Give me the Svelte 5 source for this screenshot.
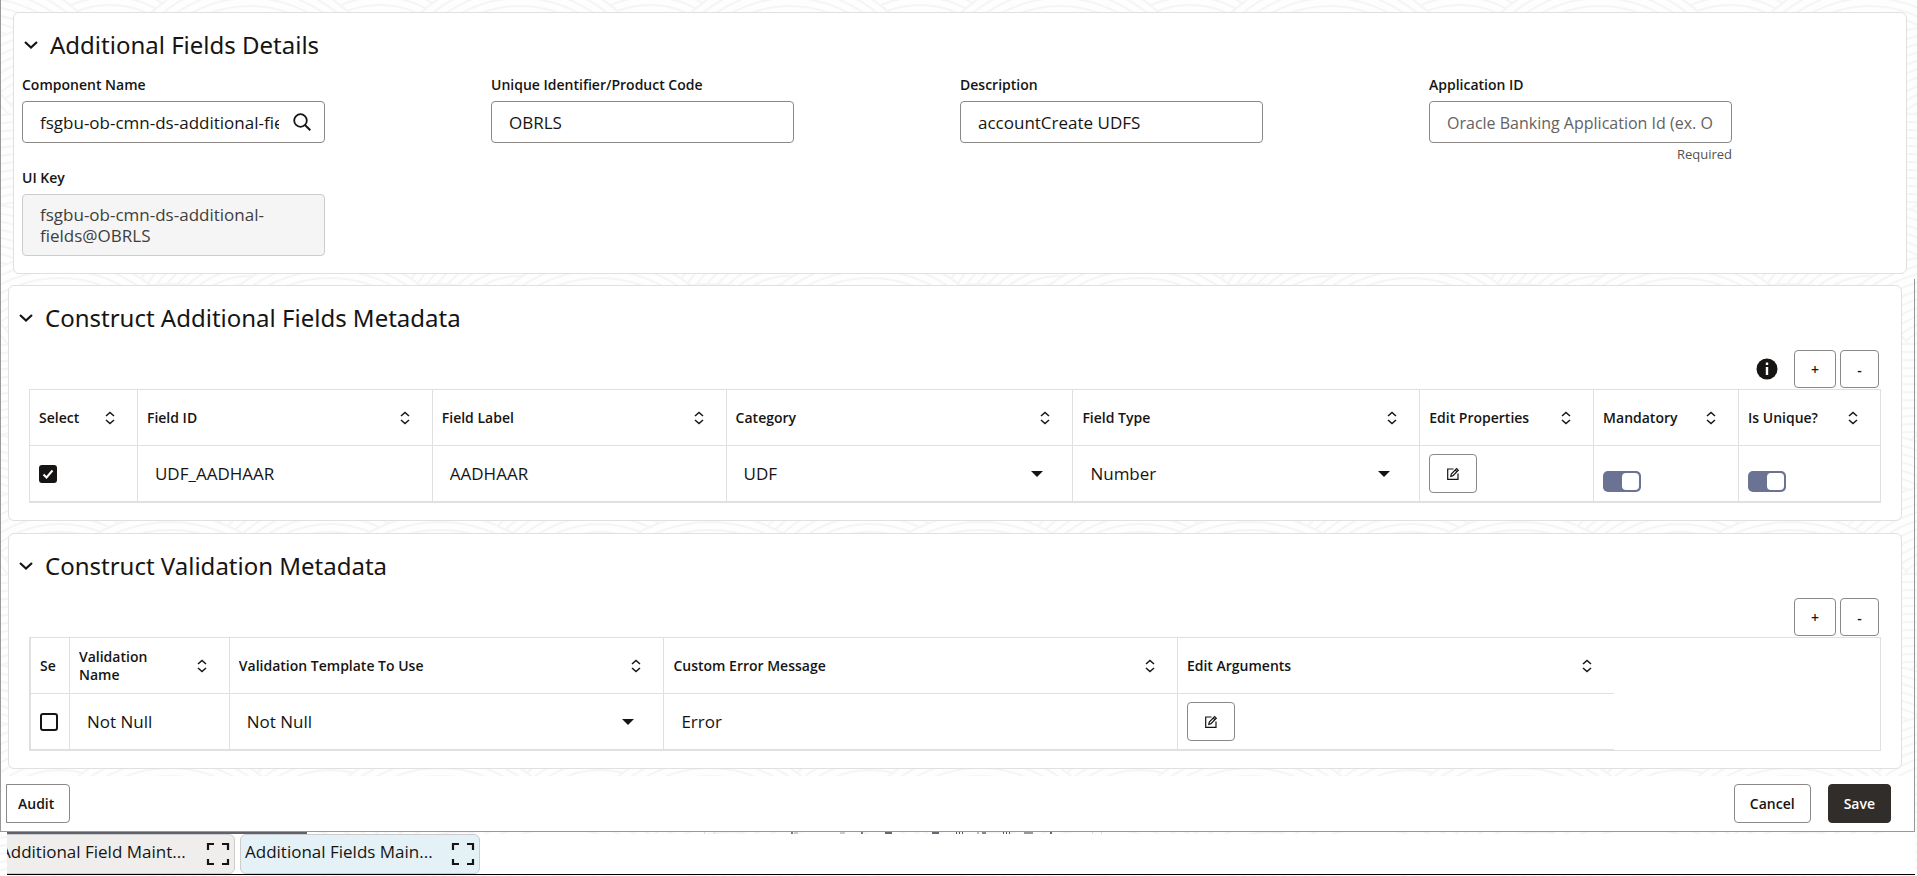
<script>
    //Values of the details form
    let componentName = "fsgbu-ob-cmn-ds-additional-fields";
    let productCode = "OBRLS";
    let description = "accountCreate UDFS";
    let applicationId = "";
    let uiKey = "fsgbu-ob-cmn-ds-additional-fields@OBRLS";

    //Columns of the two tables, 'size' is the relative width of the column
    const fieldColumns = [
        {label: "Select", size: 108},
        {label: "Field ID", size: 295},
        {label: "Field Label", size: 294},
        {label: "Category", size: 347},
        {label: "Field Type", size: 347},
        {label: "Edit Properties", size: 174},
        {label: "Mandatory", size: 145},
        {label: "Is Unique?", size: 141}
    ];
    const validationColumns = [
        {label: "Select", size: 39, narrow: true},
        {label: "Validation Name", size: 160},
        {label: "Validation Template To Use", size: 435},
        {label: "Custom Error Message", size: 514},
        {label: "Edit Arguments", size: 436}
    ];

    let fieldRows = [
        {selected: true, id: "UDF_AADHAAR", label: "AADHAAR", category: "UDF", type: "Number", mandatory: true, unique: true}
    ];
    let validationRows = [
        {selected: false, name: "Not Null", template: "Not Null", message: "Error"}
    ];

    //Minimised windows in the task bar
    const tasks = [
        {title: "Additional Field Maint...", active: false},
        {title: "Additional Fields Main...", active: true}
    ];

    //Radii of the rings in the background pattern
    const rings = [146, 138, 130, 122, 114, 106, 98, 90, 82, 74, 66, 58, 50, 42, 34, 26, 18, 10];
    //Ring centres in one tile, repeated to the left, right, top and bottom so that the tiles join
    const ringCenters = [[20, 30], [190, 10], [110, 95], [250, 120], [60, 170], [170, 200]]
        .flatMap(([x, y]) => [-1, 0, 1].flatMap((i) => [-1, 0, 1].map((j) => [x + i * 270, y + j * 230])))
        .sort((a, b) => a[1] - b[1]);

    //Text tops of the page behind, seen under the window edge: x, width, colour
    const marks = [[704, 1, "#ddd"], [714, 1, "#ddd"], [791, 2, "#777"], [794, 4, "#ccc"], [840, 5, "#ccc"], [861, 2, "#777"],
        [885, 7, "#666974"], [932, 7, "#666974"], [956, 1, "#555"], [959, 1, "#555"], [962, 1, "#555"], [977, 2, "#bbb"],
        [982, 4, "#888"], [1003, 1, "#555"], [1006, 1, "#555"], [1009, 1, "#555"], [1024, 9, "#999"], [1050, 2, "#666"], [1092, 1, "#ddd"], [1101, 1, "#ddd"]];

    const share = (columns, size) => {
        const total = columns.reduce((sum, column) => sum + column.size, 0);
        return (size / total) * 100;
    };
</script>

{#snippet title(text)}
    <h2>
        <button class="collapse">
            <svg width="14" height="14" viewBox="0 0 14 14" aria-hidden="true">
                <path d="M1 4l6 5.600 6-5.600" fill="none" stroke="currentColor" stroke-width="2.200" />
            </svg>
            {text}
        </button>
    </h2>
{/snippet}

{#snippet head(columns)}
    <colgroup>
        {#each columns as column}
            <col style="width: {share(columns, column.size)}%">
        {/each}
    </colgroup>
    <thead>
        <tr>
            {#each columns as column}
                <th class:narrow={column.narrow}>
                    <div class="head-cell">
                        <span>{column.label}</span>
                        {#if !column.narrow}
                            <button class="sort" aria-label="Sort by {column.label}">
                                <svg width="10" height="14" viewBox="0 0 10 14" aria-hidden="true">
                                    <path d="M1 5l4-3.500 4 3.500M1 9l4 3.500 4-3.500" fill="none" stroke="currentColor" stroke-width="1.500" />
                                </svg>
                            </button>
                        {/if}
                    </div>
                </th>
            {/each}
        </tr>
    </thead>
{/snippet}

{#snippet editButton(label)}
    <button class="edit" aria-label={label}>
        <svg width="14" height="14" viewBox="0 0 14 14" aria-hidden="true">
            <g fill="none" stroke="currentColor" stroke-width="1.200">
                <path d="M7.500 2H1.700v10.300H12V6.500" />
                <path d="M4.800 9.300l.5-2.200L10.600 1.500l1.700 1.700L7 8.700z" />
                <path d="M9.200 3l1.700 1.700" />
            </g>
        </svg>
    </button>
{/snippet}

{#snippet caret()}
    <svg class="caret" width="12" height="6" viewBox="0 0 12 6" aria-hidden="true">
        <path d="M0 0h12L6 6z" fill="currentColor" />
    </svg>
{/snippet}

{#snippet tick()}
    <svg class="tick" width="18" height="18" viewBox="0 0 18 18" aria-hidden="true">
        <path d="M4.500 9.500l3 3 6-7" fill="none" stroke="#fff" stroke-width="2" />
    </svg>
{/snippet}

<div class="page">
    <svg class="backdrop" aria-hidden="true">
        <defs>
            <pattern id="waves" width="270" height="230" patternUnits="userSpaceOnUse">
                {#each ringCenters as [cx, cy]}
                    {#each rings as r}
                        <circle {cx} {cy} {r} fill="#fefefe" stroke="#f5f5f5" stroke-width="2" />
                    {/each}
                {/each}
            </pattern>
        </defs>
        <rect width="100%" height="100%" fill="url(#waves)" />
    </svg>

    <div class="window">
        <section class="card details">
            {@render title("Additional Fields Details")}
            <div class="form">
                <div class="field">
                    <label for="component-name">Component Name</label>
                    <div class="box">
                        <input id="component-name" bind:value={componentName}>
                        <button class="search" aria-label="Search">
                            <svg width="18" height="18" viewBox="0 0 18 18" aria-hidden="true">
                                <circle cx="7.500" cy="7.500" r="6.300" fill="none" stroke="currentColor" stroke-width="1.800" />
                                <path d="M12 12l5.300 5.300" stroke="currentColor" stroke-width="2" />
                            </svg>
                        </button>
                    </div>
                </div>
                <div class="field">
                    <label for="product-code">Unique Identifier/Product Code</label>
                    <div class="box"><input id="product-code" bind:value={productCode}></div>
                </div>
                <div class="field">
                    <label for="description">Description</label>
                    <div class="box"><input id="description" bind:value={description}></div>
                </div>
                <div class="field">
                    <label for="application-id">Application ID</label>
                    <div class="box">
                        <input id="application-id" placeholder="Oracle Banking Application Id (ex. OBRLS)" bind:value={applicationId}>
                    </div>
                    <span class="hint">Required</span>
                </div>
                <div class="field">
                    <label for="ui-key">UI Key</label>
                    <textarea id="ui-key" rows="2" readonly value={uiKey}></textarea>
                </div>
            </div>
        </section>

        <div class="lower">
            <section class="card">
                {@render title("Construct Additional Fields Metadata")}
                <div class="toolbar">
                    <svg class="info" width="22" height="22" viewBox="0 0 22 22" aria-hidden="true">
                        <circle cx="11" cy="11" r="10.500" fill="currentColor" />
                        <path d="M11 9v8M11 4.500v2.500" stroke="#fff" stroke-width="2.400" />
                    </svg>
                    <button class="add">+</button>
                    <button class="remove">-</button>
                </div>
                <div class="grid">
                    <table>
                        {@render head(fieldColumns)}
                        <tbody>
                            {#each fieldRows as row}
                                <tr>
                                    <td>
                                        <label class="check">
                                            <input type="checkbox" aria-label="Select {row.id}" bind:checked={row.selected}>
                                            {@render tick()}
                                        </label>
                                    </td>
                                    <td><input class="text" aria-label="Field ID" bind:value={row.id}></td>
                                    <td><input class="text" aria-label="Field Label" bind:value={row.label}></td>
                                    <td>
                                        <div class="choice">
                                            <select aria-label="Category" bind:value={row.category}><option>UDF</option></select>
                                            {@render caret()}
                                        </div>
                                    </td>
                                    <td>
                                        <div class="choice">
                                            <select aria-label="Field Type" bind:value={row.type}><option>Number</option></select>
                                            {@render caret()}
                                        </div>
                                    </td>
                                    <td>{@render editButton("Edit properties")}</td>
                                    <td class="switch-cell"><input class="switch" type="checkbox" role="switch" aria-label="Mandatory" bind:checked={row.mandatory}></td>
                                    <td class="switch-cell"><input class="switch" type="checkbox" role="switch" aria-label="Is Unique?" bind:checked={row.unique}></td>
                                </tr>
                            {/each}
                        </tbody>
                    </table>
                </div>
            </section>

            <section class="card">
                {@render title("Construct Validation Metadata")}
                <div class="toolbar">
                    <button class="add">+</button>
                    <button class="remove">-</button>
                </div>
                <div class="grid">
                    <table class="validation">
                        {@render head(validationColumns)}
                        <tbody>
                            {#each validationRows as row}
                                <tr>
                                    <td>
                                        <label class="check">
                                            <input type="checkbox" aria-label="Select {row.name}" bind:checked={row.selected}>
                                            {@render tick()}
                                        </label>
                                    </td>
                                    <td><input class="text" aria-label="Validation Name" bind:value={row.name}></td>
                                    <td>
                                        <div class="choice">
                                            <select aria-label="Validation Template To Use" bind:value={row.template}><option>Not Null</option></select>
                                            {@render caret()}
                                        </div>
                                    </td>
                                    <td><input class="text" aria-label="Custom Error Message" bind:value={row.message}></td>
                                    <td>{@render editButton("Edit arguments")}</td>
                                </tr>
                            {/each}
                        </tbody>
                    </table>
                </div>
            </section>

            <footer>
                <button class="audit">Audit</button>
                <button class="cancel">Cancel</button>
                <button class="save">Save</button>
            </footer>
        </div>
    </div>

    <!--Edge of the page behind the window-->
    <svg class="sliver" height="2" aria-hidden="true">
        <rect x="7" width="300" height="2" fill="#5f626c" />
        {#each marks as [x, width, fill]}
            <rect {x} {width} {fill} height="2" />
        {/each}
    </svg>

    <nav class="taskbar">
        {#each tasks as task}
            <div class="task" class:active={task.active}>
                <span>{task.title}</span>
                <button aria-label="Maximise {task.title}">
                    <svg width="24" height="24" viewBox="0 0 24 24" aria-hidden="true">
                        <path d="M2 8V2h6M16 2h6v6M22 17v5h-6M8 22H2v-5" fill="none" stroke="currentColor" stroke-width="2.200" />
                    </svg>
                </button>
            </div>
        {/each}
    </nav>
</div>

<style>
    :global(body){
        background-color: #fff;
        color: #161513;
        font-family: "Open Sans", "Noto Sans", sans-serif;
        font-size: 17px;
    }

    .page, .page *{
        box-sizing: border-box;
    }

    .page{
        position: relative;
        overflow: hidden;
    }

    .backdrop{
        position: absolute;
        inset: 0;
        width: 100%;
        height: 100%;
        z-index: -1;
    }

    button, input, select, textarea{
        font: inherit;
        color: inherit;
        margin: 0;
        padding: 0;
        border: none;
        background: none;
        outline: none;
        border-radius: 0;
    }

    svg{
        display: block;
        flex: none;
    }

    /*Window and cards*/
    .window{
        margin-right: 2px;
        padding-top: 12px;
        border-left: 1px solid #999;
        border-bottom: 1px solid #999;
    }

    .card{
        margin: 0 12px 12px 7px;
        padding: 16px 20px 17px;
        background-color: #fff;
        border: 1px solid #e0e0e0;
        border-radius: 6px;
    }

    .card.details{
        margin: 0 8px 5px 12px;
        padding: 16px 8px 17px;
    }

    .lower{
        padding-top: 6px;
        border-right: 1px solid #999;
    }

    h2{
        margin: 0 0 0 -10px;
        font-size: 24px;
        line-height: 32px;
        font-weight: 400;
        font-family: "Noto Sans", "Open Sans", sans-serif;
    }

    .details h2{
        margin-left: 2px;
    }

    .collapse{
        display: flex;
        align-items: center;
        gap: 12px;
    }

    /*Details form*/
    .form{
        display: grid;
        grid-template-columns: repeat(4, 1fr);
        row-gap: 3px;
        margin-top: 14px;
    }

    .field{
        display: flex;
        flex-direction: column;
        gap: 6px;
        margin-right: 166px;
    }

    .field label{
        font-size: 14px;
        line-height: 20px;
        font-weight: 600;
    }

    .box{
        display: flex;
        align-items: center;
        height: 42px;
        padding: 0 17px;
        background-color: #fff;
        border: 1px solid #8b8886;
        border-radius: 4px;
    }

    .box input{
        flex: 1;
        min-width: 0;
        width: 100%;
    }

    .box input::placeholder{
        font-size: 16px;
        color: #65625f;
        opacity: 1;
    }

    .search{
        margin: 0 -4px 0 14px;
    }

    .hint{
        margin-top: -4px;
        text-align: right;
        font-size: 13px;
        line-height: 18px;
        padding-bottom: 2px;
        color: #55524f;
    }

    textarea{
        display: block;
        height: 62px;
        padding: 9px 17px;
        line-height: 21px;
        resize: none;
        overflow: hidden;
        color: #403e3c;
        background-color: #f5f5f5;
        border: 1px solid #ccc;
        border-radius: 4px;
    }

    /*Tables*/
    .toolbar{
        display: flex;
        justify-content: flex-end;
        align-items: center;
        gap: 4px;
        margin: 16px 2px 1px 0;
    }

    .info{
        margin-right: 12px;
    }

    .add, .remove, .edit, footer button{
        background-color: #fff;
        border: 1px solid #8b8886;
        border-radius: 4px;
        font-size: 14px;
        font-weight: 600;
    }

    .add, .remove{
        width: 42px;
        height: 38px;
    }

    .remove{
        width: 39px;
    }

    .grid{
        border: 1px solid #e0e0e0;
    }

    table{
        width: 100%;
        table-layout: fixed;
        border-collapse: separate;
        border-spacing: 0;
    }

    .validation{
        width: 85.6%;
        border-left: 1px solid #e0e0e0;
    }

    th, td{
        height: 56px;
        padding: 0 0 0 9px;
        border-bottom: 1px solid #e0e0e0;
        border-right: 1px solid #e0e0e0;
        text-align: left;
        vertical-align: middle;
    }

    th:last-child, td:last-child{
        border-right: none;
    }

    th{
        padding-right: 22px;
        font-size: 14px;
        line-height: 18px;
        font-weight: 600;
    }

    th.narrow{
        padding-right: 13px;
    }

    .head-cell{
        display: flex;
        justify-content: space-between;
        align-items: center;
        gap: 20px;
        overflow: hidden;
    }

    .text, select{
        display: block;
        width: 100%;
        height: 40px;
        padding: 0 8px;
    }

    select{
        appearance: none;
    }

    .choice{
        position: relative;
    }

    .caret{
        position: absolute;
        right: 29px;
        top: 17px;
        pointer-events: none;
    }

    .check{
        position: relative;
        display: block;
        width: 18px;
        height: 18px;
    }

    .check input{
        display: block;
        width: 18px;
        height: 18px;
        appearance: none;
        border: 2px solid #161513;
        border-radius: 3px;
    }

    .check input:checked{
        background-color: #161513;
    }

    .tick{
        display: none;
        position: absolute;
        left: 0;
        top: 0;
        pointer-events: none;
    }

    .check input:checked + .tick{
        display: block;
    }

    .edit{
        display: flex;
        align-items: center;
        justify-content: center;
        width: 48px;
        height: 39px;
    }

    .switch-cell{
        padding-top: 16px;
    }

    .switch{
        display: block;
        appearance: none;
        width: 38px;
        height: 21px;
        padding: 2px;
        background-color: #6b7394;
        border-radius: 5px;
    }

    .switch::before{
        content: "";
        display: block;
        width: 17px;
        height: 17px;
        background-color: #fff;
        border-radius: 4px;
    }

    .switch:checked::before{
        margin-left: auto;
    }

    /*Footer buttons*/
    footer{
        display: flex;
        gap: 17px;
        margin-top: -5px;
        padding: 8px 23px 8px 5px;
        background-color: #fff;
    }

    footer button{
        height: 39px;
        padding: 0 15px;
    }

    footer .audit{
        margin-right: auto;
        padding-left: 11px;
        border-radius: 0 4px 4px 0;
    }

    footer .save{
        color: #fff;
        background-color: #312d2a;
        border-color: #312d2a;
    }

    /*Task bar*/
    .sliver{
        width: 100%;
    }

    .taskbar{
        display: flex;
        gap: 5px;
        margin: 0 2px 1px 7px;
        overflow: hidden;
        background-color: #fff;
        border-bottom: 1px solid #000;
    }

    .task{
        display: flex;
        justify-content: space-between;
        width: 240px;
        height: 40px;
        padding: 0 4px;
        background-color: #f0eeec;
        border: 1px solid #ccc;
        border-radius: 6px;
    }

    .task:first-child{
        margin-left: -12px;
    }

    .task.active{
        background-color: #e4f1f7;
    }

    .task span{
        line-height: 34px;
        white-space: nowrap;
    }
</style>
